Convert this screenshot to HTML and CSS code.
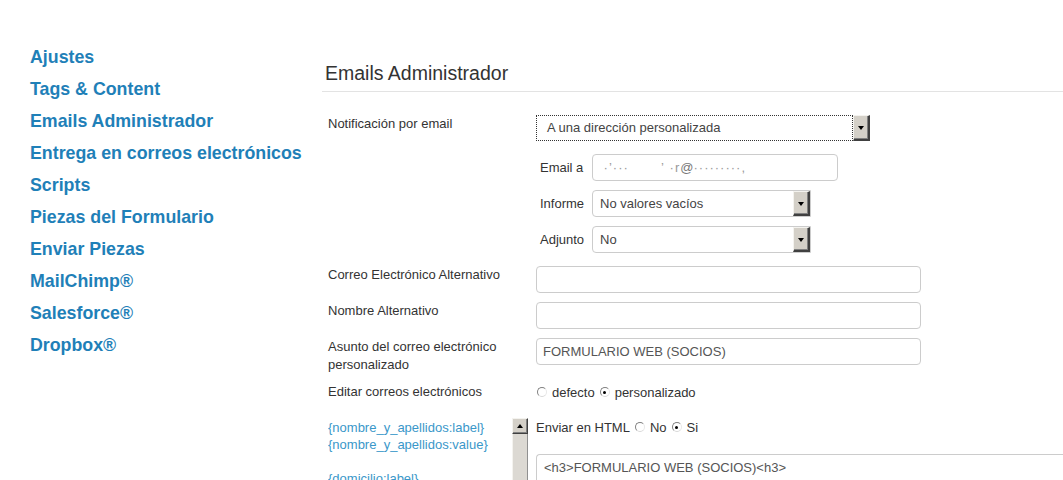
FILE: index.html
```html
<!DOCTYPE html>
<html lang="es">
<head>
<meta charset="utf-8">
<title>Emails Administrador</title>
<link rel="stylesheet" href="styles.css">
</head>
<body>
<div class="page">
  <nav class="sidebar">
    <a class="nav-link" href="#">Ajustes</a>
    <a class="nav-link" href="#">Tags &amp; Content</a>
    <a class="nav-link" href="#">Emails Administrador</a>
    <a class="nav-link" href="#">Entrega en correos electrónicos</a>
    <a class="nav-link" href="#">Scripts</a>
    <a class="nav-link" href="#">Piezas del Formulario</a>
    <a class="nav-link" href="#">Enviar Piezas</a>
    <a class="nav-link" href="#">MailChimp®</a>
    <a class="nav-link" href="#">Salesforce®</a>
    <a class="nav-link" href="#">Dropbox®</a>
  </nav>
  <main class="main">
    <h2 class="title">Emails Administrador</h2>
    <div class="form">
      <div class="row row-first">
        <div class="label">Notificación por email</div>
        <div class="control">
          <div class="select select-focus">
            <span class="select-text focus-ring">A una dirección personalizada</span>
            <span class="select-btn"><span class="tri"></span></span>
          </div>
        </div>
      </div>

      <div class="row row-sub">
        <div class="label"></div>
        <div class="control">
          <div class="sub">
            <div class="sub-row">
              <span class="sub-label">Email a</span>
              <div class="input input-email"><span class="blur">&nbsp;&middot;&#8217;&middot;&middot;&middot;&nbsp;&nbsp;&nbsp;&nbsp;&nbsp;&nbsp;&nbsp;&#8217;&nbsp;&middot;r</span><span class="at">@</span><span class="blur">&middot;&middot;&middot;&middot;&middot;&middot;&middot;&middot;&middot;,</span></div>
            </div>
            <div class="sub-row">
              <span class="sub-label">Informe</span>
              <div class="select select-small">
                <span class="select-text">No valores vacíos</span>
                <span class="select-btn"><span class="tri"></span></span>
              </div>
            </div>
            <div class="sub-row">
              <span class="sub-label">Adjunto</span>
              <div class="select select-small">
                <span class="select-text">No</span>
                <span class="select-btn"><span class="tri"></span></span>
              </div>
            </div>
          </div>
        </div>
      </div>

      <div class="row">
        <div class="label">Correo Electrónico Alternativo</div>
        <div class="control"><div class="input input-wide"></div></div>
      </div>
      <div class="row">
        <div class="label">Nombre Alternativo</div>
        <div class="control"><div class="input input-wide"></div></div>
      </div>
      <div class="row">
        <div class="label">Asunto del correo electrónico<br>personalizado</div>
        <div class="control"><div class="input input-wide">FORMULARIO WEB (SOCIOS)</div></div>
      </div>
      <div class="row row-radios">
        <div class="label">Editar correos electrónicos</div>
        <div class="control radios">
          <span class="radio"></span><span class="radio-label">defecto</span>
          <span class="radio checked"></span><span class="radio-label">personalizado</span>
        </div>
      </div>

      <div class="row row-editor">
        <div class="label">
          <div class="tags-box">
            <div class="tags">
              <div class="tag">{nombre_y_apellidos:label}</div>
              <div class="tag">{nombre_y_apellidos:value}</div>
              <div class="tag tag-gap">{domicilio:label}</div>
            </div>
            <div class="scrollbar">
              <span class="sb-btn"><span class="tri-up"></span></span>
              <span class="sb-track"></span>
            </div>
          </div>
        </div>
        <div class="control">
          <div class="html-line">
            <span class="html-label">Enviar en HTML</span>
            <span class="radio"></span><span class="radio-label">No</span>
            <span class="radio checked"></span><span class="radio-label">Si</span>
          </div>
          <div class="editor">&lt;h3&gt;FORMULARIO WEB (SOCIOS)&lt;h3&gt;</div>
        </div>
      </div>
    </div>
  </main>
</div>
</body>
</html>
```

FILE: styles.css
```css
html, body {
  margin: 0;
  padding: 0;
  background: #ffffff;
}
body {
  font-family: "Liberation Sans", Arial, sans-serif;
  color: #333333;
  height: 480px;
  overflow: hidden;
}
.page {
  display: flex;
  align-items: flex-start;
}
.sidebar {
  width: 322px;
  flex: none;
  box-sizing: border-box;
  padding: 41px 0 0 30px;
  display: flex;
  flex-direction: column;
}
.nav-link {
  display: block;
  font-size: 17.8px;
  font-weight: bold;
  line-height: 32px;
  color: #1f80b8;
  text-decoration: none;
  white-space: nowrap;
}
.main {
  flex: 1;
  min-width: 0;
}
.title {
  margin: 0;
  padding: 61px 0 6px 3px;
  font-size: 19.5px;
  line-height: 24px;
  font-weight: normal;
  color: #333333;
  border-bottom: 1px solid #e3e3e3;
}
.form {
  padding-top: 23px;
  font-size: 13px;
}
.row {
  display: grid;
  grid-template-columns: 214px 1fr;
  margin-bottom: 9px;
}
.row-first { margin-bottom: 13px; }
.row-sub { margin-bottom: 13px; }
.label {
  padding-left: 6px;
  line-height: 18px;
  color: #333333;
}
.control {
  min-width: 0;
}

/* selects */
.select {
  display: flex;
  box-sizing: border-box;
  height: 27px;
  background: #fff;
}
.select-focus {
  width: 334px;
  height: 26px;
}
.select-focus .select-text {
  padding-left: 10px;
  line-height: 24px;
}
.focus-ring {
  border: 1px dotted #333;
}
.select-text {
  flex: 1;
  min-width: 0;
  color: #444;
  white-space: nowrap;
  overflow: hidden;
}
.select-small {
  width: 219px;
  border: 1px solid #cccccc;
  border-radius: 4px 0 0 4px;
}
.select-small .select-text {
  padding-left: 7px;
  line-height: 25px;
}
.select-btn {
  flex: none;
  width: 17px;
  box-sizing: border-box;
  background: #d4d0c8;
  border-top: 1px solid #f4f3ef;
  border-left: 1px solid #f4f3ef;
  border-right: 2px solid #404040;
  border-bottom: 2px solid #404040;
  box-shadow: inset -1px -1px 0 #808080;
  display: flex;
  align-items: center;
  justify-content: center;
}
.tri {
  width: 0;
  height: 0;
  border-left: 3.5px solid transparent;
  border-right: 3.5px solid transparent;
  border-top: 4px solid #000;
  margin-top: 1px;
}

/* sub block */
.sub {
  display: flex;
  flex-direction: column;
  gap: 9px;
}
.sub-row {
  display: flex;
  align-items: center;
}
.sub-label {
  width: 56px;
  flex: none;
  box-sizing: border-box;
  padding-left: 4px;
  color: #333;
}

/* inputs */
.input {
  box-sizing: border-box;
  height: 27px;
  border: 1px solid #cccccc;
  border-radius: 4px;
  padding: 0 6px;
  line-height: 25px;
  color: #555;
  white-space: nowrap;
  overflow: hidden;
  background: #fff;
}
.input-email { width: 246px; }
.input-wide { width: 385px; }
.blur { color: #9a9a9a; letter-spacing: 1px; }
.at { color: #777; }

/* radios */
.radios, .html-line {
  display: flex;
  align-items: center;
  height: 18px;
  color: #333;
}
.row-radios { margin-bottom: 17px; }
.radio {
  width: 8px;
  height: 8px;
  flex: none;
  border: 1px solid #808080;
  border-right-color: #e8e8e8;
  border-bottom-color: #d8d8d8;
  border-radius: 50%;
  background: #fff;
  margin-left: 1px;
  margin-right: 5px;
  position: relative;
}
.radio.checked::after {
  content: "";
  position: absolute;
  left: 2.5px;
  top: 2.5px;
  width: 3px;
  height: 3px;
  border-radius: 50%;
  background: #000;
}
.radio-label {
  margin-right: 4px;
}
.html-label {
  margin-right: 4px;
}

/* editor row */
.tags-box {
  display: flex;
  width: 200px;
  height: 62px;
  overflow: hidden;
}
.tags {
  flex: 1;
  min-width: 0;
  line-height: 17px;
  color: #3a97c9;
  padding-top: 1px;
}
.tag-gap { margin-top: 17px; }
.scrollbar {
  width: 16px;
  flex: none;
  display: flex;
  flex-direction: column;
}
.sb-btn {
  height: 16px;
  flex: none;
  box-sizing: border-box;
  background: #d4d0c8;
  border-top: 1px solid #f4f3ef;
  border-left: 1px solid #f4f3ef;
  border-right: 1px solid #404040;
  border-bottom: 1px solid #404040;
  box-shadow: inset -1px -1px 0 #808080;
  display: flex;
  align-items: center;
  justify-content: center;
}
.tri-up {
  width: 0;
  height: 0;
  border-left: 3.5px solid transparent;
  border-right: 3.5px solid transparent;
  border-bottom: 4px solid #000;
}
.sb-track {
  flex: 1;
  background: #dcd9d3;
  border-left: 1px solid #f4f3ef;
  border-right: 1px solid #909090;
}
.editor {
  margin-top: 18px;
  height: 26px;
  box-sizing: border-box;
  border: 1px solid #cccccc;
  border-right: none;
  border-bottom: none;
  border-radius: 4px 0 0 0;
  padding: 4px 7px 0;
  line-height: 17px;
  color: #555;
  white-space: nowrap;
}
```
